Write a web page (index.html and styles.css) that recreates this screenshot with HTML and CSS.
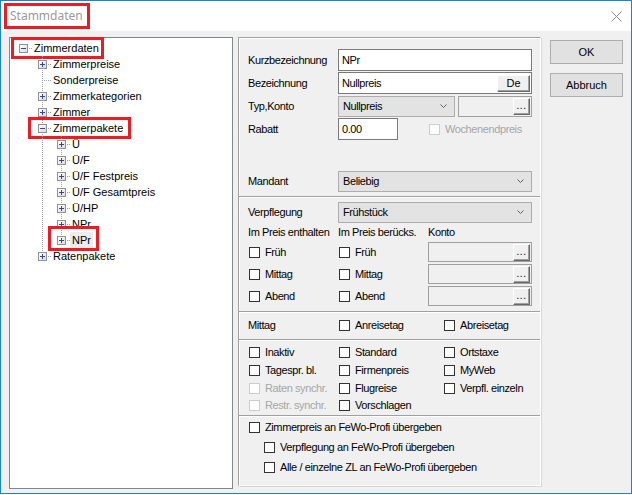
FILE: index.html
```html
<!DOCTYPE html>
<html lang="de">
<head>
    <meta charset="UTF-8">
    <title>Stammdaten</title>
    <link rel="stylesheet" href="styles.css">
</head>
<body>
<div class="window">
    <div class="titlebar">
        <span class="title">Stammdaten</span>
        <svg class="close" width="11" height="11" viewBox="0 0 11 11"><path d="M0.5 0.5L10.5 10.5M10.5 0.5L0.5 10.5" stroke="#8c8c8c" stroke-width="1" fill="none"/></svg>
    </div>

    <div class="content">
        <!-- Baum links -->
        <div class="tree">
            <div class="trow"><span class="node mark"><span class="c r"><i class="box minus"></i></span><span class="lbl">Zimmerdaten</span></span></div>
            <div class="trow"><span class="g"></span><span class="c t"><i class="box"></i></span><span class="lbl">Zimmerpreise</span></div>
            <div class="trow"><span class="g"></span><span class="c t"></span><span class="lbl">Sonderpreise</span></div>
            <div class="trow"><span class="g"></span><span class="c t"><i class="box"></i></span><span class="lbl">Zimmerkategorien</span></div>
            <div class="trow"><span class="g"></span><span class="c t"><i class="box"></i></span><span class="lbl">Zimmer</span></div>
            <div class="trow"><span class="g"></span><span class="node mark mark-pak"><span class="c t"><i class="box minus"></i></span><span class="lbl">Zimmerpakete</span></span></div>
            <div class="trow"><span class="g"></span><span class="g v"></span><span class="c t"><i class="box"></i></span><span class="lbl">Ü</span></div>
            <div class="trow"><span class="g"></span><span class="g v"></span><span class="c t"><i class="box"></i></span><span class="lbl">Ü/F</span></div>
            <div class="trow"><span class="g"></span><span class="g v"></span><span class="c t"><i class="box"></i></span><span class="lbl">Ü/F Festpreis</span></div>
            <div class="trow"><span class="g"></span><span class="g v"></span><span class="c t"><i class="box"></i></span><span class="lbl">Ü/F Gesamtpreis</span></div>
            <div class="trow"><span class="g"></span><span class="g v"></span><span class="c t"><i class="box"></i></span><span class="lbl">Ü/HP</span></div>
            <div class="trow"><span class="g"></span><span class="g v"></span><span class="c t"><i class="box"></i></span><span class="lbl">NPr</span></div>
            <div class="trow"><span class="g"></span><span class="g v"></span><span class="node mark mark-npr"><span class="c l"><i class="box"></i></span><span class="lbl sel">NPr</span></span></div>
            <div class="trow"><span class="g"></span><span class="c l"><i class="box"></i></span><span class="lbl">Ratenpakete</span></div>
        </div>

        <!-- Eingabebereich -->
        <div class="panel">
            <div class="frow">
                <span class="flabel">Kurzbezeichnung</span>
                <div class="edit grow">NPr</div>
            </div>
            <div class="frow">
                <span class="flabel">Bezeichnung</span>
                <div class="edit grow">Nullpreis<span class="bbtn de">De</span></div>
            </div>
            <div class="frow">
                <span class="flabel">Typ,Konto</span>
                <div class="combo typ">Nullpreis<svg class="chev" width="7" height="4" viewBox="0 0 7 4"><path d="M0.5 0.5L3.5 3.5L6.5 0.5" fill="none" stroke="#606060"/></svg></div>
                <div class="lookup grow"><span class="bbtn dots">...</span></div>
            </div>
            <div class="frow">
                <span class="flabel">Rabatt</span>
                <div class="edit rabatt">0.00</div>
                <span class="check off weekend"><i class="cb"></i>Wochenendpreis</span>
            </div>

            <div class="frow mandant">
                <span class="flabel">Mandant</span>
                <div class="combo grow">Beliebig<svg class="chev" width="7" height="4" viewBox="0 0 7 4"><path d="M0.5 0.5L3.5 3.5L6.5 0.5" fill="none" stroke="#606060"/></svg></div>
            </div>
            <div class="sep"></div>

            <div class="frow verpf">
                <span class="flabel">Verpflegung</span>
                <div class="combo grow">Frühstück<svg class="chev" width="7" height="4" viewBox="0 0 7 4"><path d="M0.5 0.5L3.5 3.5L6.5 0.5" fill="none" stroke="#606060"/></svg></div>
            </div>
            <div class="kgrid khead">
                <span>Im Preis enthalten</span>
                <span>Im Preis berücks.</span>
                <span>Konto</span>
            </div>
            <div class="kgrid krow">
                <span class="check"><i class="cb"></i>Früh</span>
                <span class="check"><i class="cb"></i>Früh</span>
                <div class="lookup"><span class="bbtn dots">...</span></div>
            </div>
            <div class="kgrid krow">
                <span class="check"><i class="cb"></i>Mittag</span>
                <span class="check"><i class="cb"></i>Mittag</span>
                <div class="lookup"><span class="bbtn dots">...</span></div>
            </div>
            <div class="kgrid krow">
                <span class="check"><i class="cb"></i>Abend</span>
                <span class="check"><i class="cb"></i>Abend</span>
                <div class="lookup"><span class="bbtn dots">...</span></div>
            </div>
            <div class="sep sep-m"></div>

            <div class="cgrid mrow">
                <span>Mittag</span>
                <span class="check"><i class="cb"></i>Anreisetag</span>
                <span class="check"><i class="cb"></i>Abreisetag</span>
            </div>
            <div class="sep sep-f"></div>

            <div class="cgrid flags">
                <span class="check"><i class="cb"></i>Inaktiv</span>
                <span class="check"><i class="cb"></i>Standard</span>
                <span class="check"><i class="cb"></i>Ortstaxe</span>
                <span class="check"><i class="cb"></i>Tagespr. bl.</span>
                <span class="check"><i class="cb"></i>Firmenpreis</span>
                <span class="check"><i class="cb"></i>MyWeb</span>
                <span class="check off"><i class="cb"></i>Raten synchr.</span>
                <span class="check"><i class="cb"></i>Flugreise</span>
                <span class="check"><i class="cb"></i>Verpfl. einzeln</span>
                <span class="check off"><i class="cb"></i>Restr. synchr.</span>
                <span class="check"><i class="cb"></i>Vorschlagen</span>
                <span></span>
            </div>
            <div class="sep sep-w"></div>

            <div class="fewo">
                <span class="check"><i class="cb"></i>Zimmerpreis an FeWo-Profi übergeben</span>
                <span class="check sub"><i class="cb"></i>Verpflegung an FeWo-Profi übergeben</span>
                <span class="check sub"><i class="cb"></i>Alle / einzelne ZL an FeWo-Profi übergeben</span>
            </div>
        </div>

        <div class="buttons">
            <button class="btn">OK</button>
            <button class="btn">Abbruch</button>
        </div>
    </div>
</div>
</body>
</html>
```

FILE: styles.css
```css
* {
    margin: 0;
    padding: 0;
    box-sizing: border-box;
}
body {
    background: #fff;
    font-family: "Liberation Sans", Arial, sans-serif;
    font-size: 11px;
    color: #000;
}
.window {
    width: 632px;
    height: 494px;
    border: 1px solid #1883d7;
    background: #f0f0f0;
    display: flex;
    flex-direction: column;
}
.titlebar {
    height: 30px;
    flex-shrink: 0;
    background: #fff;
    display: flex;
    align-items: center;
    justify-content: space-between;
    padding: 0 9px 0 6px;
}
.title {
    font-family: "Noto Sans", sans-serif;
    font-size: 12px;
    color: #9a9a9a;
    height: 20px;
    line-height: 20px;
    padding: 0 4px 0 3px;
    outline: 3px solid #ec1c24;
}
.content {
    display: flex;
    padding: 6px 8px 0 8px;
}

/* tree */
.tree {
    width: 224px;
    height: 452px;
    margin-right: 5px;
    border: 1px solid #828790;
    background: #fff;
    padding: 2px 0 0 4px;
}
.trow {
    display: flex;
    height: 16px;
    align-items: flex-start;
}
.node {
    display: flex;
    align-items: flex-start;
}
.g {
    width: 19px;
    height: 16px;
    flex-shrink: 0;
}
.g.v {
    background: repeating-linear-gradient(#a0a0a0 0 1px, transparent 1px 2px) 9px 0 / 1px 100% no-repeat;
}
.c {
    width: 18px;
    height: 16px;
    flex-shrink: 0;
}
.c.r {
    background: repeating-linear-gradient(to right, #a0a0a0 0 1px, transparent 1px 2px) 9px 8px / 9px 1px no-repeat;
}
.c.t {
    background:
        repeating-linear-gradient(#a0a0a0 0 1px, transparent 1px 2px) 9px 0 / 1px 100% no-repeat,
        repeating-linear-gradient(to right, #a0a0a0 0 1px, transparent 1px 2px) 9px 8px / 9px 1px no-repeat;
}
.c.l {
    background:
        repeating-linear-gradient(#a0a0a0 0 1px, transparent 1px 2px) 9px 0 / 1px 9px no-repeat,
        repeating-linear-gradient(to right, #a0a0a0 0 1px, transparent 1px 2px) 9px 8px / 9px 1px no-repeat;
}
.box {
    display: block;
    width: 9px;
    height: 9px;
    margin: 4px 0 0 5px;
    border: 1px solid #919191;
    background:
        linear-gradient(#2c4a9e, #2c4a9e) 1px 3px / 5px 1px no-repeat,
        linear-gradient(#2c4a9e, #2c4a9e) 3px 1px / 1px 5px no-repeat,
        linear-gradient(135deg, #fff, #dcdcdc);
}
.box.minus {
    background:
        linear-gradient(#2c4a9e, #2c4a9e) 1px 3px / 5px 1px no-repeat,
        linear-gradient(135deg, #fff, #dcdcdc);
}
.lbl {
    height: 16px;
    line-height: 16px;
    padding: 0 2px;
    white-space: nowrap;
}
.lbl.sel {
    background: #ececec;
}
.mark {
    outline: 3px solid #ec1c24;
}
.mark-pak {
    padding: 0 3px 0 2px;
    margin-left: -2px;
}
.mark-npr {
    padding: 3px 3px 0 1px;
    margin: -3px 0 0 -1px;
}

/* right panel */
.panel {
    width: 303px;
    height: 449px;
    margin-right: 9px;
    border: 1px solid;
    border-color: #a0a0a0 #fff #fff #a0a0a0;
    box-shadow: inset 1px 1px 0 #fff, 1px 1px 0 #d8d8d8;
    padding: 11px 8px 0 9px;
    letter-spacing: -0.4px;
}
.frow {
    display: flex;
    align-items: center;
    height: 22px;
    margin-bottom: 1px;
}
.flabel {
    width: 90px;
    flex-shrink: 0;
}
.grow {
    flex: 1;
}
.edit {
    height: 22px;
    display: flex;
    align-items: center;
    justify-content: space-between;
    background: #fff;
    border: 1px solid #7a7a7a;
    padding: 0 1px 0 3px;
}
.rabatt {
    width: 60px;
}
.combo {
    height: 21px;
    display: flex;
    align-items: center;
    justify-content: space-between;
    background: #e3e3e3;
    border: 1px solid #adadad;
    padding: 0 7px 0 4px;
}
.combo.typ {
    width: 117px;
    margin-right: 3px;
}
.lookup {
    height: 21px;
    display: flex;
    align-items: center;
    justify-content: flex-end;
    background: #f0f0f0;
    border: 1px solid #a0a0a0;
    padding-right: 1px;
}
.bbtn {
    display: flex;
    align-items: center;
    justify-content: center;
    background: #f0f0f0;
    border: 1px solid;
    border-color: #fff #696969 #696969 #fff;
    box-shadow: inset -1px -1px 0 #a0a0a0;
    letter-spacing: 0;
}
.de {
    width: 33px;
    height: 17px;
    font-size: 11px;
}
.dots {
    width: 17px;
    height: 17px;
    align-items: flex-end;
    padding-bottom: 3px;
    font-size: 10px;
    letter-spacing: 0.5px;
}
.weekend {
    margin-left: 30px;
}
.mandant {
    margin-top: 30px;
}
.sep {
    margin: 4px -8px 0 -9px;
    border-top: 1px solid #a0a0a0;
    border-bottom: 1px solid #fff;
}
.sep-m {
    margin-top: 5px;
}
.sep-f {
    margin-top: 5px;
}
.sep-w {
    margin-top: 2px;
}
.verpf {
    margin-top: 3px;
}

/* checkboxes */
.check {
    display: flex;
    align-items: center;
    white-space: nowrap;
}
.cb {
    display: block;
    width: 11px;
    height: 11px;
    flex-shrink: 0;
    margin: 0 5px 0 1px;
    border: 1px solid #333;
    background: #fff;
}
.check.off {
    color: #a6a6a6;
}
.check.off .cb {
    border-color: #cdcdcd;
}
.kgrid {
    display: grid;
    grid-template-columns: 90px 90px 1fr;
    align-items: center;
}
.khead {
    height: 16px;
}
.krow {
    height: 20px;
    margin-top: 2px;
}
.krow .lookup {
    height: 20px;
}
.cgrid {
    display: grid;
    grid-template-columns: 90px 105px 1fr;
    align-items: center;
}
.mrow {
    height: 18px;
    margin-top: 3px;
}
.flags {
    grid-template-rows: 18px 18px 18px 16px;
    margin-top: 2px;
}
.fewo {
    display: flex;
    flex-direction: column;
}
.fewo .check {
    height: 20px;
}
.fewo .sub {
    padding-left: 15px;
}

/* buttons */
.buttons {
    display: flex;
    flex-direction: column;
    gap: 9px;
    padding-top: 3px;
}
.btn {
    width: 73px;
    height: 24px;
    font-family: "Liberation Sans", Arial, sans-serif;
    font-size: 11px;
    color: #000;
    background: #e1e1e1;
    border: 1px solid #adadad;
}
```
